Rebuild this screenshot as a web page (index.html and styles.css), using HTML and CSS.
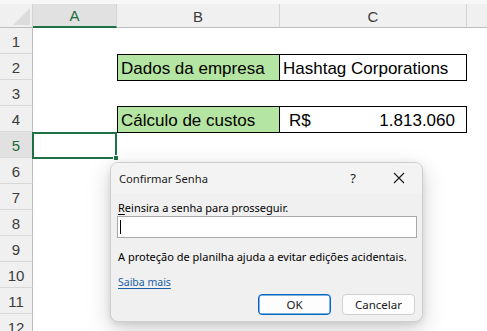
FILE: index.html
```html
<!DOCTYPE html>
<html lang="pt">
<head>
<meta charset="utf-8">
<title>Confirmar Senha</title>
<link rel="stylesheet" href="styles.css">
</head>
<body>
<div class="app">
  <div class="topstrip"></div>
  <div class="sheet">
    <div class="corner">
      <svg width="33" height="24" viewBox="0 0 33 24"><polygon points="13,21 30,4 30,21" fill="#dcdcdc"/></svg>
    </div>
    <div class="colhead sel">A</div>
    <div class="colhead">B</div>
    <div class="colhead">C</div>
    <div class="colhead last"></div>

    <div class="rowhead">1</div><div class="cell"></div><div class="cell"></div><div class="cell"></div><div class="cell"></div>
    <div class="rowhead">2</div><div class="cell"></div><div class="cell box green">Dados da empresa</div><div class="cell box right">Hashtag Corporations</div><div class="cell"></div>
    <div class="rowhead">3</div><div class="cell"></div><div class="cell"></div><div class="cell"></div><div class="cell"></div>
    <div class="rowhead">4</div><div class="cell"></div><div class="cell box green">Cálculo de custos</div><div class="cell box right acct"><span>R$</span><span>1.813.060</span></div><div class="cell"></div>
    <div class="rowhead sel">5</div><div class="cell active"><span class="handle"></span></div><div class="cell"></div><div class="cell"></div><div class="cell"></div>
    <div class="rowhead">6</div><div class="cell"></div><div class="cell"></div><div class="cell"></div><div class="cell"></div>
    <div class="rowhead">7</div><div class="cell"></div><div class="cell"></div><div class="cell"></div><div class="cell"></div>
    <div class="rowhead">8</div><div class="cell"></div><div class="cell"></div><div class="cell"></div><div class="cell"></div>
    <div class="rowhead">9</div><div class="cell"></div><div class="cell"></div><div class="cell"></div><div class="cell"></div>
    <div class="rowhead">10</div><div class="cell"></div><div class="cell"></div><div class="cell"></div><div class="cell"></div>
    <div class="rowhead">11</div><div class="cell"></div><div class="cell"></div><div class="cell"></div><div class="cell"></div>
    <div class="rowhead">12</div><div class="cell"></div><div class="cell"></div><div class="cell"></div><div class="cell"></div>
  </div>

  <div class="dialog">
    <div class="titlebar">
      <span class="title">Confirmar Senha</span>
      <span class="help">?</span>
      <span class="close">
        <svg width="12" height="12" viewBox="0 0 12 12"><path d="M1 1 L11 11 M11 1 L1 11" stroke="#1a1a1a" stroke-width="1.1" fill="none"/></svg>
      </span>
    </div>
    <div class="dbody">
      <div class="label"><u>R</u>einsira a senha para prosseguir.</div>
      <div class="input"><span class="caret"></span></div>
      <div class="info">A proteção de planilha ajuda a evitar edições acidentais.</div>
      <div class="link">Saiba mais</div>
      <div class="buttons">
        <div class="btn primary">OK</div>
        <div class="btn">Cancelar</div>
      </div>
    </div>
  </div>
</div>
</body>
</html>
```
FILE: styles.css
```css
* { box-sizing: border-box; }
html, body { margin: 0; padding: 0; background: #ffffff; }
.app {
  position: relative;
  width: 487px;
  height: 331px;
  overflow: hidden;
  font-family: "Liberation Sans", Arial, sans-serif;
}
.topstrip { height: 4px; background: #f7f7f7; }
.sheet {
  display: grid;
  grid-template-columns: 33px 84px 163px 187px 1fr;
  grid-template-rows: 24px;
  grid-auto-rows: 26px;
}
.corner {
  background: #f0f0f0;
  border-right: 1px solid #d4d4d4;
  border-bottom: 1px solid #bdbdbd;
}
.corner svg { display: block; }
.colhead {
  background: #f0f0f0;
  border-right: 1px solid #d4d4d4;
  border-bottom: 1px solid #bdbdbd;
  color: #3c3c3c;
  font-size: 15px;
  display: flex;
  align-items: center;
  justify-content: center;
  padding-top: 1px;
}
.colhead.sel {
  background: #e1e1e1;
  border-bottom: 2px solid #1e7145;
  color: #1e6b40;
}
.colhead.last { border-right: none; }
.rowhead {
  background: #f0f0f0;
  border-right: 1px solid #bdbdbd;
  border-bottom: 1px solid #d8d8d8;
  color: #3c3c3c;
  font-size: 15px;
  display: flex;
  align-items: center;
  justify-content: center;
  padding-top: 2px;
}
.rowhead.sel { background: #e1e1e1; color: #1e6b40; }
.cell {
  background: #ffffff;
  position: relative;
  font-size: 17px;
  color: #000;
  display: flex;
  align-items: center;
  padding: 2px 3px 0 3px;
  white-space: nowrap;
}
.cell.box {
  border: 1px solid #000;
  margin-bottom: -1px;
  z-index: 1;
}
.cell.right { border-left: none; }
.cell.green { background: #b4e5a2; }
.cell.acct { justify-content: space-between; padding-left: 9px; padding-right: 11px; }
.cell.active {
  border: 2px solid #1e7145;
  margin-left: -1px;
  margin-bottom: -1px;
  z-index: 2;
}
.handle {
  position: absolute;
  right: -4px;
  bottom: -4px;
  width: 6px;
  height: 6px;
  background: #1e7145;
  border: 1px solid #fff;
}

.dialog {
  position: absolute;
  left: 110px;
  top: 162px;
  width: 313px;
  height: 160px;
  background: #f0f0f0;
  border: 1px solid #cfcfcf;
  border-radius: 8px;
  box-shadow: 0 8px 24px rgba(0,0,0,0.18), 0 2px 6px rgba(0,0,0,0.10);
  font-family: "Noto Sans", "Open Sans", sans-serif;
  font-size: 11px;
  color: #000;
  z-index: 5;
  overflow: hidden;
}
.titlebar {
  height: 30px;
  background: #f3f3f3;
  display: flex;
  align-items: center;
  padding-left: 8px;
  padding-right: 0;
}
.title { flex: 1; font-size: 11.2px; color: #1a1a1a; padding-top: 1px; }
.help { width: 46px; text-align: center; font-size: 13px; color: #1a1a1a; }
.close {
  width: 46px;
  display: flex;
  justify-content: center;
  align-items: center;
}
.close svg { display: block; }
.dbody {
  background: #f0f0f0;
  padding: 7px 6px 0 6px;
  display: flex;
  flex-direction: column;
}
.label { line-height: 16px; padding-left: 1px; white-space: nowrap; }
.label u { text-decoration-thickness: 1px; text-underline-offset: 2px; }
.input {
  height: 22px;
  width: 300px;
  background: #fff;
  border: 1px solid #a8a8a8;
  position: relative;
}
.caret {
  position: absolute;
  left: 2px;
  top: 3px;
  width: 1px;
  height: 14px;
  background: #000;
}
.info { margin-top: 11px; line-height: 16px; padding-left: 1px; white-space: nowrap; }
.link {
  margin-top: 9px;
  line-height: 16px;
  color: #1a5fa8;
  text-decoration: underline;
  text-underline-offset: 2px;
  font-size: 10.5px;
  padding-left: 1px;
  white-space: nowrap;
}
.buttons {
  margin-top: 4px;
  display: flex;
  justify-content: flex-end;
  gap: 11px;
  padding-right: 1px;
}
.btn {
  width: 73px;
  height: 21px;
  border: 1px solid #d0d0d0;
  border-radius: 4px;
  background: #fdfdfd;
  display: flex;
  align-items: center;
  justify-content: center;
  font-size: 11.5px;
  color: #1a1a1a;
}
.btn.primary { border-color: #0067c0; box-shadow: inset 0 0 0 0.5px #0067c0; }
```
